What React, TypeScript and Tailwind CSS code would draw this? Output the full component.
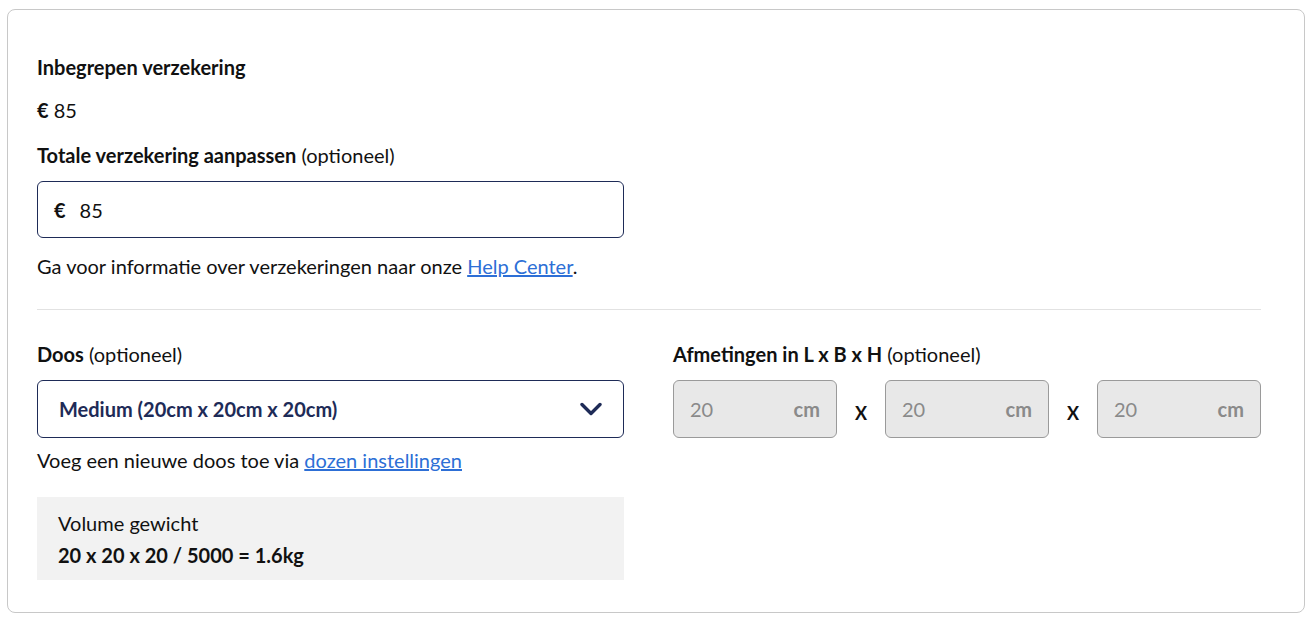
function DimBox() {
  return (
    <div className="flex h-[58px] w-[164px] items-center justify-between rounded-[6px] border border-[#9a9a9a] bg-[#e8e8e8] px-[16px]">
      <span className="text-[#8a8a8a]">20</span>
      <span className="font-bold text-[#8a8a8a]">cm</span>
    </div>
  );
}

function Chevron() {
  return (
    <svg width="22" height="14" viewBox="0 0 22 14" fill="none" className="text-[#1e2b57]">
      <polyline points="2,2.5 11,11.5 20,2.5" stroke="currentColor" strokeWidth="3.4" strokeLinecap="round" strokeLinejoin="round" />
    </svg>
  );
}

export default function App() {
  return (
    <div className="min-h-screen bg-white pt-[9px] pl-[7px] text-[20px] leading-[26px] text-[#111]" style={{ fontFamily: 'Lato, "Open Sans", sans-serif' }}>
      <div className="w-[1298px] rounded-[8px] border border-[#c8c8c8] px-[29px] pt-[44px] pb-[32px]">
        <h3 className="font-bold">Inbegrepen verzekering</h3>
        <p className="mt-[17px]"><span className="font-bold">€</span> 85</p>
        <p className="mt-[19px]">
          <span className="font-bold">Totale verzekering aanpassen</span> (optioneel)
        </p>
        <div className="mt-[13px] flex h-[57px] w-[587px] items-center rounded-[6px] border border-[#1e2b57] px-[16px]">
          <span className="font-bold">€</span>
          <span className="ml-[14px]">85</span>
        </div>
        <p className="mt-[15px]">
          Ga voor informatie over verzekeringen naar onze{' '}
          <a href="#" className="text-[#2d6fd6] underline">Help Center</a>.
        </p>

        <div className="mt-[30px] h-px w-[1224px] bg-[#e2e2e2]" />

        <div className="mt-[31px] flex gap-[49px]">
          <div className="w-[587px]">
            <p>
              <span className="font-bold">Doos</span> (optioneel)
            </p>
            <div className="mt-[13px] flex h-[58px] items-center justify-between rounded-[6px] border border-[#1e2b57] pl-[21px] pr-[21px]">
              <span className="font-bold text-[#1e2b57]">Medium (20cm x 20cm x 20cm)</span>
              <Chevron />
            </div>
            <p className="mt-[9px]">
              Voeg een nieuwe doos toe via{' '}
              <a href="#" className="text-[#2d6fd6] underline">dozen instellingen</a>
            </p>
            <div className="mt-[24px] bg-[#f2f2f2] px-[21px] pt-[13px] pb-[12px]">
              <p>Volume gewicht</p>
              <p className="mt-[6px] font-bold">20 x 20 x 20 / 5000 = 1.6kg</p>
            </div>
          </div>
          <div className="w-[588px]">
            <p>
              <span className="font-bold">Afmetingen in L x B x H</span> (optioneel)
            </p>
            <div className="mt-[13px] flex items-center justify-between">
              <DimBox />
              <span className="mt-[8px] text-[18px] font-bold">X</span>
              <DimBox />
              <span className="mt-[8px] text-[18px] font-bold">X</span>
              <DimBox />
            </div>
          </div>
        </div>
      </div>
    </div>
  );
}
